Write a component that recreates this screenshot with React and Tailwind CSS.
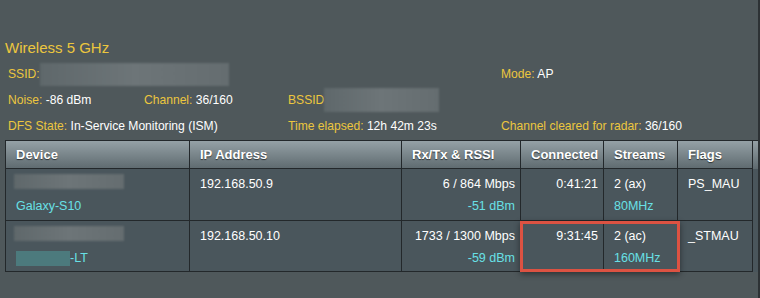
import React from 'react';

const font = { fontFamily: '"Liberation Sans", Arial, sans-serif' };

const Blur = ({ className = '' }) => (
  <div className={`bg-gradient-to-r from-[#5f686b] via-[#6d7578] to-[#656d70] blur-[1px] ${className}`} />
);

const Label = ({ label, value }) => (
  <span className="whitespace-nowrap">
    <span className="text-[#ecc63e]">{label}</span>
    <span className="text-white">{value}</span>
  </span>
);

const cols = 'grid grid-cols-[184px_212px_119px_83px_74px_75px]';
const cell = 'border-r border-b border-[#23282b]';

const clients = [
  {
    name: <span className="text-[#68e0e6]">Galaxy-S10</span>,
    ip: '192.168.50.9',
    rate: '6 / 864 Mbps',
    rssi: '-51 dBm',
    time: '0:41:21',
    streams: '2 (ax)',
    bw: '80MHz',
    flags: 'PS_MAU',
    h: 'h-[52px]',
  },
  {
    name: (
      <span className="flex items-center">
        <span className="block w-[54px] h-[15px] bg-[#4c7a7d] blur-[0.5px]" />
        <span className="text-[#68e0e6]">-LT</span>
      </span>
    ),
    ip: '192.168.50.10',
    rate: '1733 / 1300 Mbps',
    rssi: '-59 dBm',
    time: '9:31:45',
    streams: '2 (ac)',
    bw: '160MHz',
    flags: '_STMAU',
    h: 'h-[51px]',
  },
];

export default function App() {
  return (
    <div className="w-[760px] h-[298px] bg-[#4f585b] flex overflow-hidden" style={font}>
      <div className="flex-1 relative">
        <div className="pt-[39px] pl-[5px] text-[15px] leading-[18px] text-[#ecc63e]">Wireless 5 GHz</div>

        <div className="pl-[8px] text-[12.1px] mt-[4px]">
          <div className="flex items-center h-[26px]">
            <div className="w-[493px] flex items-center">
              <span className="text-[#ecc63e]">SSID:</span>
              <Blur className="w-[189px] h-[23px]" />
            </div>
            <Label label="Mode: " value="AP" />
          </div>
          <div className="flex items-center h-[26px]">
            <div className="w-[136px]"><Label label="Noise: " value="-86 dBm" /></div>
            <div className="w-[144px]"><Label label="Channel: " value="36/160" /></div>
            <div className="flex items-center">
              <span className="text-[#ecc63e]">BSSID</span>
              <Blur className="w-[115px] h-[24px]" />
            </div>
          </div>
          <div className="flex items-center h-[26px]">
            <div className="w-[280px]"><Label label="DFS State: " value="In-Service Monitoring (ISM)" /></div>
            <div className="w-[213px]"><Label label="Time elapsed: " value="12h 42m 23s" /></div>
            <Label label="Channel cleared for radar: " value="36/160" />
          </div>
        </div>

        <div className="relative ml-[5px] mt-[1px] w-[753px] border-l border-t border-[#23282b] text-[12.5px] text-white">
          <div className={`${cols} h-[28px] bg-gradient-to-b from-[#95a1a6] to-[#5e6a6f] font-bold text-[13px] [text-shadow:0_1px_1px_rgba(0,0,0,0.6)]`}>
            {['Device', 'IP Address', 'Rx/Tx & RSSI', 'Connected', 'Streams', 'Flags'].map((h) => (
              <div key={h} className={`${cell} pl-[10px] flex items-center`}>{h}</div>
            ))}
          </div>
          {clients.map((c, i) => (
            <div key={i} className={`${cols} ${c.h} bg-[#4a565c] leading-[22px]`}>
              <div className={`${cell} pl-[7px] pt-[5px]`}>
                <Blur className="w-[110px] h-[15px] ml-[1px] mb-[6px]" />
                <div className="pl-[3px]">{c.name}</div>
              </div>
              <div className={`${cell} pl-[10px] pt-[4px]`}>{c.ip}</div>
              <div className={`${cell} pr-[5px] pt-[4px] text-right`}>
                <div>{c.rate}</div>
                <div className="text-[#68e0e6]">{c.rssi}</div>
              </div>
              <div className={`${cell} pr-[5px] pt-[4px] text-right`}>{c.time}</div>
              <div className={`${cell} pl-[10px] pt-[4px]`}>
                <div>{c.streams}</div>
                <div className="text-[#68e0e6]">{c.bw}</div>
              </div>
              <div className={`${cell} pl-[10px] pt-[4px]`}>{c.flags}</div>
            </div>
          ))}
          <div className="absolute left-[514px] top-[80px] w-[160px] h-[51px] border-[3px] border-[#dc5242] shadow-[0_2px_6px_rgba(0,0,0,0.45)]" />
        </div>
      </div>
      <div className="w-[2px] bg-[#2d3235]" />
    </div>
  );
}
